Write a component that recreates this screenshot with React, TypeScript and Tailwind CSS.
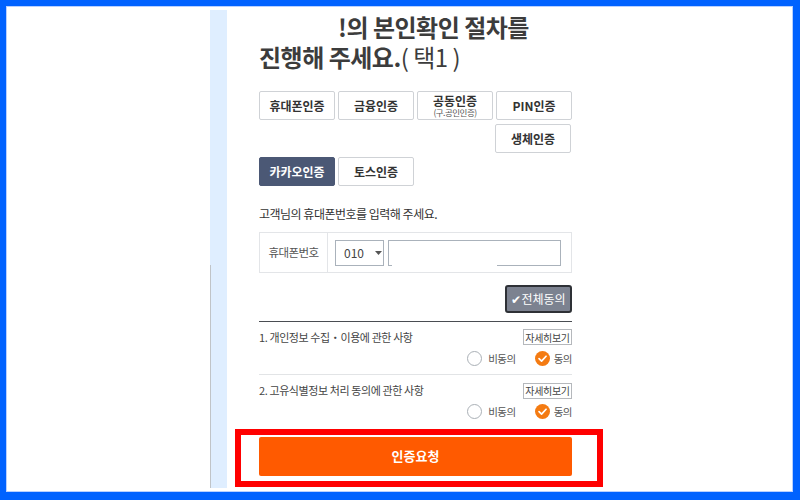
import React from 'react';

const font = { fontFamily: '"Noto Sans CJK KR", "Noto Sans", sans-serif' };

function AuthButton({ label, sub, active }: { label: string; sub?: string; active?: boolean }) {
  return (
    <div
      className={
        'flex h-[29px] w-[76px] flex-col items-center justify-center rounded-[2px] border text-[12px] font-bold leading-[12px] ' +
        (active ? 'border-[#4b5875] bg-[#4b5875] text-white' : 'border-[#cfd2d6] bg-white text-[#333]')
      }
    >
      <span>{label}</span>
      {sub && <span className="mt-[1px] text-[8.5px] leading-[9px] font-normal tracking-[-0.5px] text-[#555]">{sub}</span>}
    </div>
  );
}

function CheckCircle() {
  return (
    <svg width="15" height="15" viewBox="0 0 16 16">
      <circle cx="8" cy="8" r="8" fill="#f47b12" />
      <path d="M4.3 8.2 L7 10.8 L11.8 5.6" fill="none" stroke="#fff" strokeWidth="1.8" strokeLinecap="round" strokeLinejoin="round" />
    </svg>
  );
}

function AgreeItem({ title }: { title: string }) {
  return (
    <div className="flex flex-col pt-[7px] pb-[8px]">
      <div className="flex items-center justify-between">
        <span className="text-[11px] tracking-[-0.4px] text-[#444]">{title}</span>
        <span className="flex h-[16px] w-[49px] items-center justify-center border border-[#b5b8bc] text-[10px] tracking-[-0.3px] text-[#444]">
          자세히보기
        </span>
      </div>
      <div className="mt-[5px] flex items-center justify-end text-[10.5px] tracking-[-0.5px] text-[#555]">
        <span className="h-[15px] w-[15px] rounded-full border border-[#aab0b6] bg-white" />
        <span className="ml-[6px]">비동의</span>
        <span className="ml-[19px] flex"><CheckCircle /></span>
        <span className="ml-[4px]">동의</span>
      </div>
    </div>
  );
}

export default function App() {
  return (
    <div
      className="h-[500px] w-[800px] overflow-hidden border-t-[6px] border-r-[7px] border-b-[8px] border-l-[6px] border-[#0062ff] bg-white"
      style={font}
    >
      <div className="flex h-full border border-[#b8d0ff]">
        <div className="w-[203px] shrink-0" />
        {/* light blue strip */}
        <div className="mt-[3px] mb-[3px] flex w-[17px] shrink-0 flex-col bg-[#dfeeff]">
          <div className="h-[255px]" />
          <div className="flex-1 border-l border-[#c0c4c8]" />
        </div>
        <div className="flex w-[380px] flex-col pl-[32px]">
          <div className="mt-[5px] text-[24px] font-bold leading-[30px] tracking-[-0.5px] text-[#3c3c3c]">
            <div className="pl-[79px]">!의 본인확인 절차를</div>
            <div>
              진행해 주세요.<span className="font-normal">( 택1 )</span>
            </div>
          </div>

          <div className="mt-[19px] flex w-[313px] flex-col gap-[4px]">
            <div className="flex gap-[3px]">
              <AuthButton label="휴대폰인증" />
              <AuthButton label="금융인증" />
              <AuthButton label="공동인증" sub="(구.공인인증)" />
              <AuthButton label="PIN인증" />
            </div>
            <div className="flex justify-end pr-[1px]">
              <AuthButton label="생체인증" />
            </div>
            <div className="flex gap-[3px]">
              <AuthButton label="카카오인증" active />
              <AuthButton label="토스인증" />
            </div>
          </div>

          <div className="mt-[19px] text-[12px] leading-[18px] tracking-[-0.5px] text-[#333]">고객님의 휴대폰번호를 입력해 주세요.</div>

          <div className="mt-[9px] flex h-[41px] w-[313px] border border-[#e3e5e8]">
            <div className="flex w-[68px] items-center justify-center border-r border-[#e3e5e8] text-[11.5px] tracking-[-0.6px] text-[#555]">
              휴대폰번호
            </div>
            <div className="flex items-center pl-[7px]">
              <div className="flex h-[26px] w-[49px] items-center border border-[#aab2bb] pl-[8px] text-[12px] text-[#444]">
                010
                <svg width="7" height="4" viewBox="0 0 7 4" className="ml-[11px]">
                  <path d="M0 0 H7 L3.5 4 Z" fill="#555" />
                </svg>
              </div>
              <div className="ml-[4px] flex h-[26px] w-[173px] flex-col border-t border-r border-l border-[#aab2bb]">
                <div className="flex-1" />
                <div className="flex h-px">
                  <div className="w-[3px] bg-[#aab2bb]" />
                  <div className="flex-1" />
                  <div className="w-[63px] bg-[#aab2bb]" />
                </div>
              </div>
            </div>
          </div>

          <div className="mt-[12px] flex w-[313px] justify-end">
            <div className="flex h-[28px] w-[67px] items-center justify-center rounded-[3px] border-2 border-[#2e3136] bg-[#7c8290] text-[12px] text-white">
              ✔전체동의
            </div>
          </div>

          <div className="mt-[8px] w-[313px] border-t border-[#4a4d52]">
            <AgreeItem title="1. 개인정보 수집・이용에 관한 사항" />
            <div className="border-t border-[#e2e4e6]" />
            <AgreeItem title="2. 고유식별정보 처리 동의에 관한 사항" />
          </div>

          <div className="-ml-[24px] mt-[1px] w-[368px] border-[6px] border-[#ff0000] pt-[2px] pb-[5px] pl-[18px]">
            <div className="flex h-[39px] w-[313px] items-center justify-center rounded-[2px] bg-[#ff5a00] text-[13px] font-bold text-white">
              인증요청
            </div>
          </div>
        </div>
      </div>
    </div>
  );
}
